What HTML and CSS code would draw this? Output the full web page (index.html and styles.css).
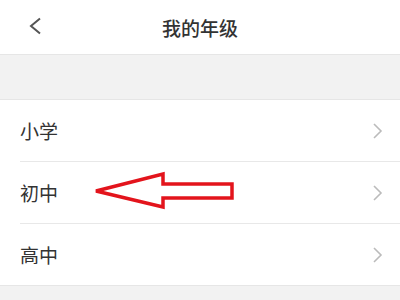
FILE: index.html
```html
<!DOCTYPE html>
<html lang="zh">
<head>
<meta charset="utf-8">
<link rel="stylesheet" href="styles.css">
</head>
<body>
<div class="page">
  <header class="nav">
    <span class="back"><svg width="14" height="18" viewBox="0 0 14 18"><path d="M12 1.5 L3 9 L12 16.5" fill="none" stroke="#555" stroke-width="2"/></svg></span>
    <h1 class="title">我的年级</h1>
  </header>
  <div class="band"></div>
  <ul class="list">
    <li class="row"><span class="label">小学</span><svg class="chev" width="11" height="16" viewBox="0 0 11 16"><path d="M2 1 L9 8 L2 15" fill="none" stroke="#bbb" stroke-width="1.6"/></svg></li>
    <li class="row"><span class="label">初中</span><svg class="chev" width="11" height="16" viewBox="0 0 11 16"><path d="M2 1 L9 8 L2 15" fill="none" stroke="#bbb" stroke-width="1.6"/></svg></li>
    <li class="row"><span class="label">高中</span><svg class="chev" width="11" height="16" viewBox="0 0 11 16"><path d="M2 1 L9 8 L2 15" fill="none" stroke="#bbb" stroke-width="1.6"/></svg></li>
  </ul>
  <div class="foot"></div>
  <svg class="arrow" width="400" height="300" viewBox="0 0 400 300"><polygon points="96,191 163,174 163,184 232,184 232,198 163,198 163,207" fill="none" stroke="#e3141c" stroke-width="3.5" stroke-linejoin="miter"/></svg>
</div>
</body>
</html>
```
FILE: styles.css
```css
* { box-sizing: border-box; }
html, body { margin: 0; padding: 0; background: #fff; }
body { font-family: "Noto Sans CJK SC", "Noto Sans", sans-serif; color: #333; }
.page { position: relative; width: 400px; height: 300px; overflow: hidden; display: flex; flex-direction: column; }
.nav { height: 55px; border-bottom: 1px solid #e6e6e6; display: flex; align-items: center; justify-content: center; position: relative; flex: none; }
.back { position: absolute; left: 28px; top: 17px; display: block; line-height: 0; }
.title { margin: 0; font-size: 19px; font-weight: 500; color: #333; line-height: 1; padding-top: 1px; }
.band { height: 45px; background: #f2f2f2; border-bottom: 1px solid #e6e6e6; flex: none; }
.list { list-style: none; margin: 0; padding: 0 0 0 20px; flex: none; }
.row { height: 62px; display: flex; align-items: center; justify-content: space-between; padding-right: 17px; border-bottom: 1px solid #e8e8e8; }
.row:last-child { height: 61px; border-bottom: none; }
.label { font-size: 19px; color: #333; line-height: 1; }
.chev { display: block; }
.foot { flex: 1; background: #f2f2f2; border-top: 1px solid #e6e6e6; }
.arrow { position: absolute; left: 0; top: 0; pointer-events: none; }
```
